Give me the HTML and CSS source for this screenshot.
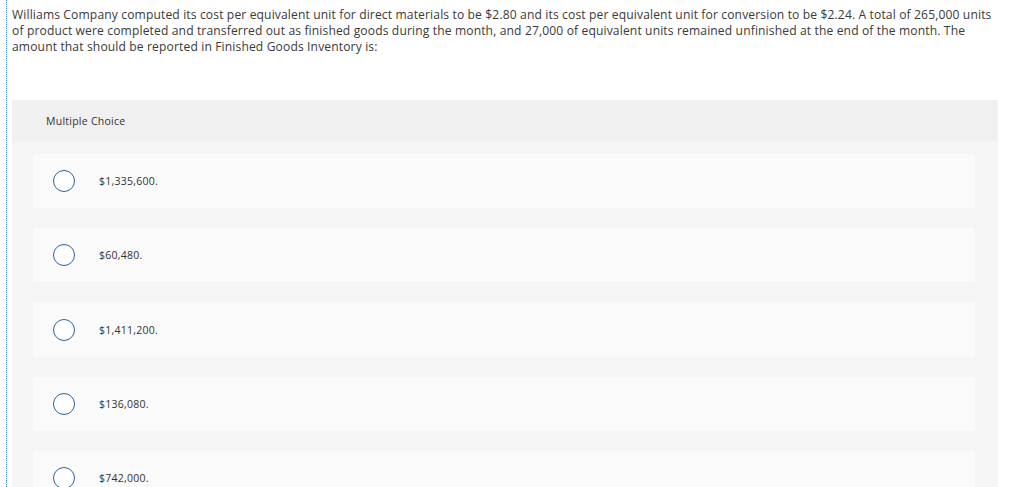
FILE: index.html
```html
<!DOCTYPE html>
<html>
<head>
<meta charset="utf-8">
<link rel="stylesheet" href="styles.css">
</head>
<body>
<div class="page">
  <p class="question">Williams Company computed its cost per equivalent unit for direct materials to be $2.80 and its cost per equivalent unit for conversion to be $2.24. A total of 265,000 units of product were completed and transferred out as finished goods during the month, and 27,000 of equivalent units remained unfinished at the end of the month. The amount that should be reported in Finished Goods Inventory is:</p>
  <div class="panel">
    <div class="panel-head">Multiple Choice</div>
    <div class="panel-body">
      <div class="option"><span class="radio"></span><span class="label">$1,335,600.</span></div>
      <div class="option"><span class="radio"></span><span class="label">$60,480.</span></div>
      <div class="option"><span class="radio"></span><span class="label">$1,411,200.</span></div>
      <div class="option"><span class="radio"></span><span class="label">$136,080.</span></div>
      <div class="option"><span class="radio"></span><span class="label">$742,000.</span></div>
    </div>
  </div>
</div>
</body>
</html>
```

FILE: styles.css
```css
html, body {
  margin: 0;
  padding: 0;
  background: #ffffff;
}
body {
  font-family: "Open Sans", "Liberation Sans", sans-serif;
  color: #333333;
  overflow: hidden;
}
.page {
  margin-left: 6px;
  border-left: 1px dotted #3a7bd5;
  padding-left: 5px;
  min-height: 487px;
}
.question {
  margin: 0;
  width: 983px;
  padding-top: 7px;
  font-size: 12.1px;
  letter-spacing: 0.13px;
  line-height: 16px;
  color: #3a3a3a;
}
.panel {
  margin-top: 45px;
  width: 986px;
  background: #f5f5f5;
  border-radius: 3px 3px 0 0;
}
.panel-head {
  height: 41px;
  background: #f0f0f0;
  border-radius: 3px 3px 0 0;
  padding-left: 34px;
  display: flex;
  align-items: center;
  font-size: 10.5px;
  letter-spacing: 0.25px;
  color: #333333;
}
.panel-body {
  padding: 13px 23px 0 21px;
  display: flex;
  flex-direction: column;
  gap: 20.25px;
}
.option {
  height: 54px;
  background: #fafafa;
  border-radius: 2px;
  display: flex;
  align-items: center;
  padding-left: 20px;
}
.radio {
  width: 20px;
  height: 20px;
  border: 1.5px solid #2e62a0;
  border-radius: 50%;
  background: #ffffff;
  flex: none;
}
.label {
  margin-left: 24px;
  font-size: 10.5px;
  letter-spacing: 0.25px;
  color: #333333;
}
```
